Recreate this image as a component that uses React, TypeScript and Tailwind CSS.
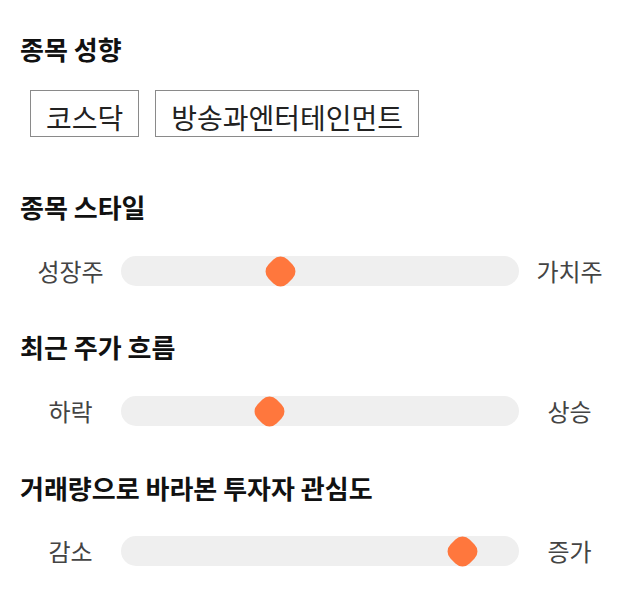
import React from "react";

const FONT = { fontFamily: '"Noto Sans CJK KR", "Noto Sans", sans-serif' };

function Heading({ children, className = "" }: { children: React.ReactNode; className?: string }) {
  return <h2 className={`text-[26px] font-bold leading-[30px] text-[#111] ${className}`}>{children}</h2>;
}

function Slider({ left, right, value, className = "" }: { left: string; right: string; value: number; className?: string }) {
  return (
    <div className={`flex h-[30px] items-center ${className}`}>
      <span className="w-[101px] text-center text-[24px] leading-[30px] text-[#444]">{left}</span>
      <div className="relative h-[30px] w-[398px] rounded-full bg-[#efefef]">
        <div
          className="absolute top-[1.5px] h-[27px] w-[27px] rotate-45 rounded-[10px] bg-[#ff773d]"
          style={{ left: `calc(${value * 100}% - 13.5px)` }}
        />
      </div>
      <span className="w-[101px] text-center text-[24px] leading-[30px] text-[#444]">{right}</span>
    </div>
  );
}

export default function App() {
  return (
    <div className="min-h-[606px] w-[640px] bg-white px-[20px] pt-[34px]" style={FONT}>
      <Heading>종목 성향</Heading>
      <div className="mt-[26px] flex gap-[16px] pl-[10px]">
        {["코스닥", "방송과엔터테인먼트"].map((t) => (
          <div
            key={t}
            className="flex h-[47px] items-center border border-[#8a8a8a] px-[15px] pt-[6px] text-[28px] text-[#222]"
          >
            {t}
          </div>
        ))}
      </div>

      <Heading className="mt-[55px]">종목 스타일</Heading>
      <Slider className="mt-[34px]" left="성장주" right="가치주" value={0.4} />

      <Heading className="mt-[46px]">최근 주가 흐름</Heading>
      <Slider className="mt-[34px]" left="하락" right="상승" value={0.374} />

      <Heading className="mt-[47px]">거래량으로 바라본 투자자 관심도</Heading>
      <Slider className="mt-[33px]" left="감소" right="증가" value={0.857} />
    </div>
  );
}
